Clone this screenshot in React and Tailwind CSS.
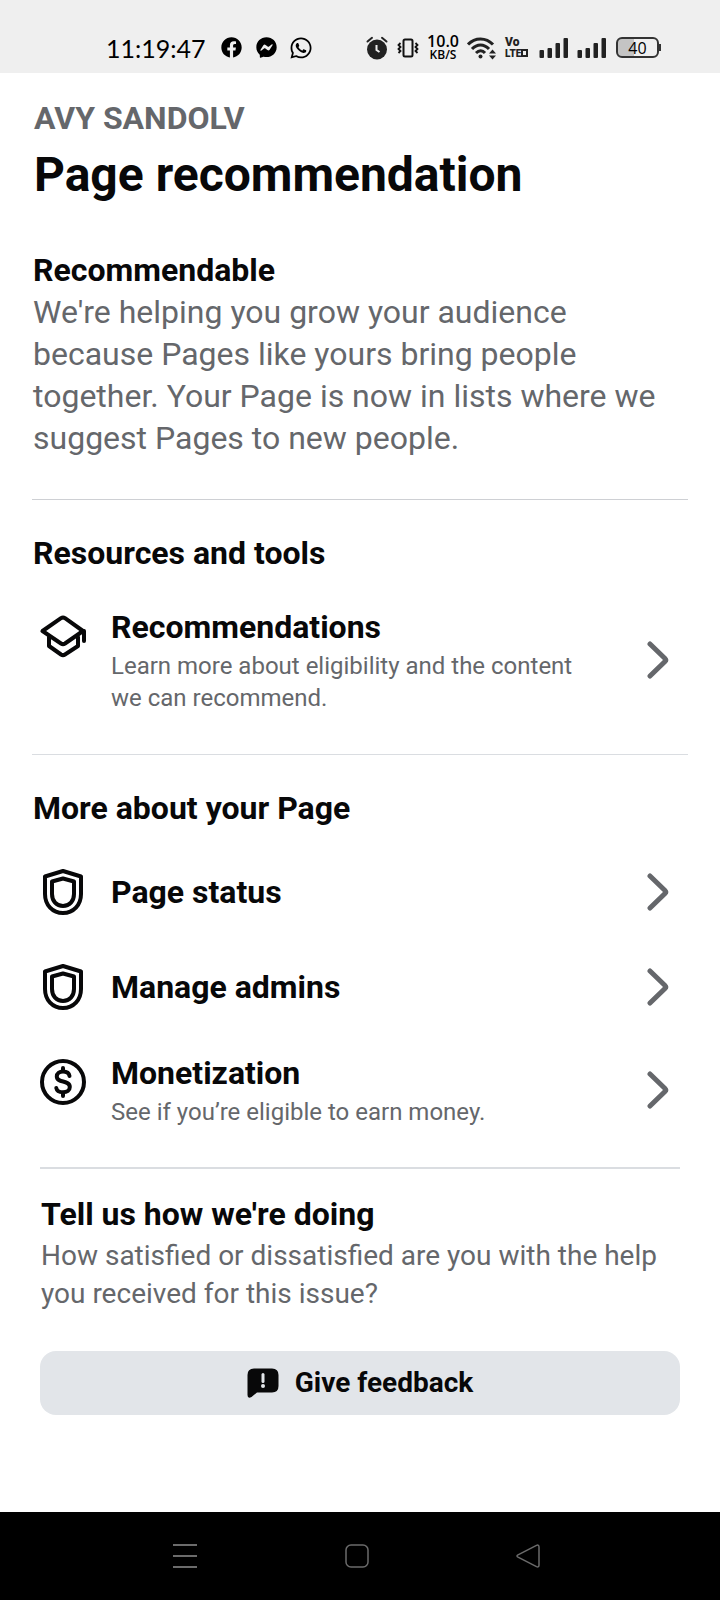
import { FaFacebook, FaFacebookMessenger, FaWhatsapp } from "react-icons/fa";

const moreLinks = [
    { title: "Page status", icon: "shield" },
    { title: "Manage admins", icon: "shield" },
    { title: "Monetization", icon: "dollar", text: "See if you’re eligible to earn money." },
];

const GraduationIcon = () => (
    <svg viewBox="0 0 46 46" className="size-[46px]" fill="none" stroke="currentColor" strokeWidth="4" strokeLinejoin="round" strokeLinecap="round">
        <path d="M2.5 18 21 5.2Q23 4 25 5.2L43 18 25 30.500Q23 31.800 21 30.500Z" />
        <path d="M44 18V28" />
        <path d="M9 24V33L21 41.500Q23 42.800 25 41.500L38 33V24" />
    </svg>
);

const ShieldIcon = () => (
    <svg viewBox="0 0 46 46" className="size-[46px]" fill="none" stroke="currentColor" strokeWidth="4" strokeLinejoin="round">
        <path d="M23 2 41 7.500V25C41 36 33.500 44 23 44S5 36 5 25V7.500Z" />
        <path d="M23 9.500 34 12.500V25C34 32 29.500 37 23 37S12 32 12 25V12.500Z" />
    </svg>
);

const DollarIcon = () => (
    <svg viewBox="0 0 46 46" className="size-[46px]" fill="none" stroke="currentColor" strokeWidth="4" strokeLinecap="round">
        <circle cx="23" cy="23" r="21" />
        <path d="M29.500 17C29 13.800 26.500 12.500 23 12.500S16.800 14.500 16.800 17.500C16.800 24.500 29.800 20.500 29.800 28C29.800 31.500 27 33.300 23 33.300S16.800 31.800 16.300 29" />
        <path d="M23 9V12M23 34V37" />
    </svg>
);

const ChevronIcon = () => (
    <svg viewBox="0 0 22 38" className="h-[38px] w-[22px] shrink-0 text-[#65676b]" fill="none" stroke="currentColor" strokeWidth="5" strokeLinecap="round" strokeLinejoin="round">
        <path d="M3 3 18 17.500Q19.500 19 18 20.500L3 35" />
    </svg>
);

const AlarmIcon = () => (
    <svg viewBox="0 0 22 24" className="h-6 w-[22px]">
        <circle cx="11" cy="13.500" r="10" fill="#222" />
        <path d="M1.500 5.500 6 1.800M20.500 5.500 16 1.800" stroke="#222" strokeWidth="2" strokeLinecap="round" />
        <path d="M10.500 9V14L13.500 16" stroke="#efefef" strokeWidth="2" fill="none" />
    </svg>
);

const VibrateIcon = () => (
    <svg viewBox="0 0 22 20" className="h-5 w-[22px]" fill="none" stroke="#111" strokeWidth="2">
        <rect x="6.500" y="1.500" width="9" height="17" rx="1.500" />
        <path d="M3.500 5 1.500 7 3.500 9 1.500 11 3.500 13 1.500 15M18.500 5 20.500 7 18.500 9 20.500 11 18.500 13 20.500 15" strokeWidth="1.800" />
    </svg>
);

const WifiIcon = () => (
    <svg viewBox="0 0 30 24" className="h-6 w-[30px]" fill="none" stroke="#222" strokeWidth="3">
        <path d="M1 8.500C8 1 19 1 26 8.500M5 13C10 7.500 17 7.500 22 13M9 17C12 14 15.500 14 18 17" />
        <circle cx="13.500" cy="20.500" r="2" fill="#222" stroke="none" />
        <path d="M22 17.500 25.500 13.500 29 17.500ZM22 19.500 25.500 23.500 29 19.500Z" fill="#222" stroke="none" />
    </svg>
);

const SignalIcon = () => (
    <svg viewBox="0 0 30 20" className="h-5 w-[30px]" fill="#222">
        <rect x="0.500" y="12" width="4.500" height="8" rx="1" />
        <rect x="8.500" y="10" width="4.500" height="10" rx="1" />
        <rect x="16.500" y="5" width="4.500" height="15" rx="1" />
        <rect x="24.500" y="0" width="4.500" height="20" rx="1" />
    </svg>
);

const StatusBar = () => (
    <header className="flex h-[73px] items-center justify-between bg-[#efefef] pt-[22px] pr-[59px] pl-[106px] text-black">
        <div className="flex items-center">
            <span className="w-[115px] font-[Lato,sans-serif] text-[25px] leading-6">11:19:47</span>
            <FaFacebook className="size-[21px]" />
            <FaFacebookMessenger className="ml-[14px] size-[21px]" />
            <FaWhatsapp className="ml-3 size-6" />
        </div>
        <div className="flex items-center">
            <AlarmIcon />
            <span className="ml-[9px]">
                <VibrateIcon />
            </span>
            <div className="ml-2 flex w-8 flex-col items-center font-['Open_Sans',sans-serif] font-semibold">
                <span className="text-base leading-[14px]">10.0</span>
                <span className="text-xs leading-[14px]">KB/S</span>
            </div>
            <span className="ml-2">
                <WifiIcon />
            </span>
            <div className="ml-2 flex w-6 flex-col font-[Roboto,sans-serif] text-[#222]">
                <span className="text-xs leading-[11px] font-black">Vo</span>
                <span className="flex items-center text-[10px] leading-[11px] font-black">
                    LTE
                    <span className="h-2 w-[7px] border-2 border-[#222]" />
                </span>
            </div>
            <span className="ml-[10px]">
                <SignalIcon />
            </span>
            <span className="ml-2">
                <SignalIcon />
            </span>
            <div className="ml-[9px] flex items-center">
                <div className="flex h-[21px] w-[43px] items-center justify-center rounded-md border-2 border-[#333] bg-linear-to-r from-[#c4c4c4] from-40% to-[#efefef] to-40% font-['Open_Sans',sans-serif] text-base leading-4">
                    40
                </div>
                <span className="h-[7px] w-[2px] bg-[#333]" />
            </div>
        </div>
    </header>
);

const LinkRow = ({ title, text, icon }) => (
    <a href="#" className="flex min-h-[59px] items-center pr-[19px] pl-2">
        <span className={text ? "mt-[7px] self-start" : ""}>
            {icon === "graduation" && <GraduationIcon />}
            {icon === "shield" && <ShieldIcon />}
            {icon === "dollar" && <DollarIcon />}
        </span>
        <span className="ml-[25px] flex flex-1 flex-col gap-[2px] pr-12">
            <span className="text-[32px] leading-[42px] font-bold">{title}</span>
            {text && <span className="text-2xl text-[#65676b]">{text}</span>}
        </span>
        <ChevronIcon />
    </a>
);

const NavBar = () => (
    <nav className="flex h-22 items-center justify-between bg-black pr-[180px] pl-[173px] text-[#6b6b6b]">
        <button aria-label="Recent apps">
            <svg viewBox="0 0 24 24" className="size-6" stroke="currentColor" strokeWidth="2">
                <path d="M0 1H24M0 12H24M0 23H24" />
            </svg>
        </button>
        <button aria-label="Home">
            <svg viewBox="0 0 24 24" className="size-6" fill="none" stroke="currentColor" strokeWidth="1.500">
                <rect x="1" y="1" width="22" height="22" rx="5" />
            </svg>
        </button>
        <button aria-label="Back">
            <svg viewBox="0 0 24 24" className="size-6" fill="none" stroke="currentColor" strokeWidth="1.500">
                <path d="M2 10.800 20.500 1.400Q23 0.400 23 3V21Q23 23.600 20.500 22.600L2 13.200Q0 12 2 10.800Z" />
            </svg>
        </button>
    </nav>
);

const App = () => {
    return (
        <div className="flex min-h-screen flex-col bg-white font-[Roboto,sans-serif] text-[#080809]">
            <StatusBar />
            <main className="flex-1 px-8 pt-6">
                <div className="px-[2px]">
                    <p className="text-[32px] leading-[42px] font-bold text-[#65676b]">AVY SANDOLV</p>
                    <h1 className="text-5xl leading-[72px] font-bold">Page recommendation</h1>
                </div>

                <section className="mt-[38px] border-b border-[#ced0d4] px-px pb-10 text-[32px] leading-[42px]">
                    <h2 className="font-bold">Recommendable</h2>
                    <p className="text-[#65676b]">
                        We're helping you grow your audience because Pages like yours bring people together. Your Page is now in lists where we suggest Pages to new people.
                    </p>
                </section>

                <section className="border-b border-[#dadde1] pt-8 pb-10">
                    <h2 className="mb-8 px-px text-[32px] leading-[42px] font-bold">Resources and tools</h2>
                    <LinkRow title="Recommendations" icon="graduation" text="Learn more about eligibility and the content we can recommend." />
                </section>

                <section className="pt-8 pb-[39px]">
                    <h2 className="mb-[33px] px-px text-[32px] leading-[42px] font-bold">More about your Page</h2>
                    <div className="flex flex-col gap-9">
                        {moreLinks.map((link) => (
                            <LinkRow key={link.title} title={link.title} icon={link.icon} text={link.text} />
                        ))}
                    </div>
                </section>

                <section className="mx-2 border-t-2 border-[#dadde1] pt-6">
                    <h2 className="px-px text-[32px] leading-[42px] font-bold">Tell us how we're doing</h2>
                    <p className="mt-[2px] px-px text-[28px] leading-[38px] text-[#65676b]">
                        How satisfied or dissatisfied are you with the help you received for this issue?
                    </p>
                    <button className="mt-[38px] flex h-16 w-full items-center justify-center gap-4 rounded-2xl bg-[#e2e5e9] text-[28px] font-bold">
                        <svg viewBox="0 0 32 30" className="h-[30px] w-8">
                            <path d="M7 0.500H25Q31.500 0.500 31.500 7V18Q31.500 24.500 25 24.500H10L4.500 29Q0.500 31 0.500 27V7Q0.500 0.500 7 0.500Z" fill="#080809" />
                            <path d="M16 6.500V13.500" stroke="#e2e5e9" strokeWidth="3" strokeLinecap="round" />
                            <circle cx="16" cy="18" r="2" fill="#e2e5e9" />
                        </svg>
                        Give feedback
                    </button>
                </section>
            </main>
            <NavBar />
        </div>
    );
};

export default App;
